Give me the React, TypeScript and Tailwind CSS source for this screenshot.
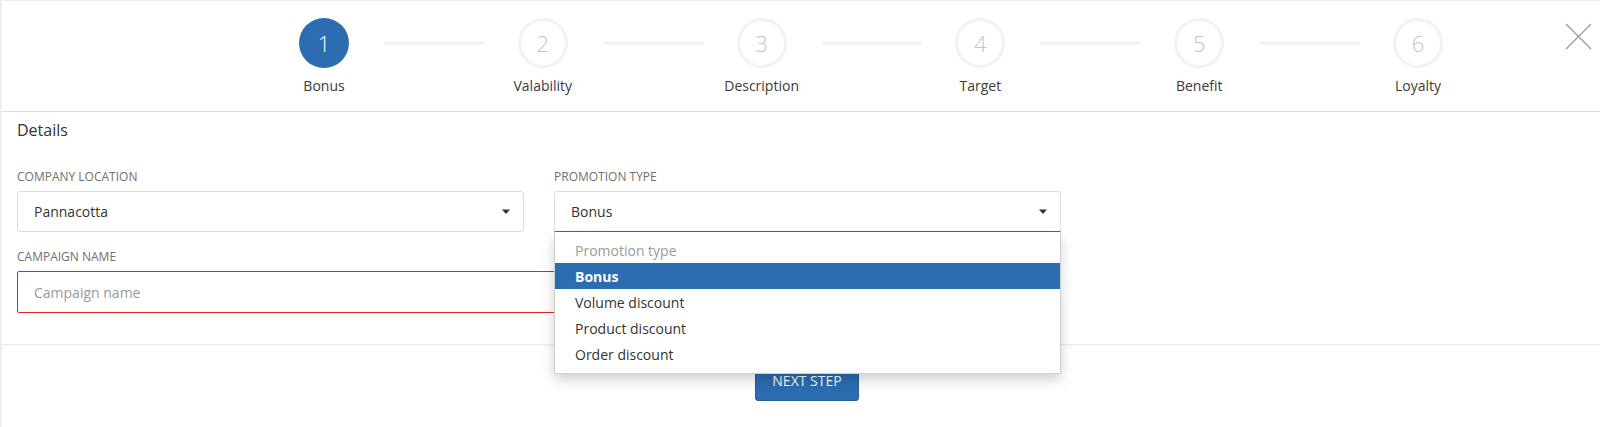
import React from 'react';

const steps = ['Bonus', 'Valability', 'Description', 'Target', 'Benefit', 'Loyalty'];

const options = ['Bonus', 'Volume discount', 'Product discount', 'Order discount'];

const Caret = () => (
  <svg width="10" height="6" viewBox="0 0 10 6" className="shrink-0">
    <path d="M1 0.5h8L5 5z" fill="#333" />
  </svg>
);

const App: React.FC = () => {
  return (
    <div
      className="w-[1600px] h-[427px] bg-white border-l-2 border-[#eceef3] overflow-hidden text-[#333]"
      style={{ fontFamily: '"Open Sans", "Noto Sans", Arial, sans-serif' }}
    >
      {/* Wizard header */}
      <header className="h-[112px] border-t border-[#eef0f4] border-b border-b-[#d6dde6] flex items-start pl-[297px]">
        <div className="flex items-start w-[1144px] mt-[17px]">
          {steps.map((label, i) => (
            <React.Fragment key={label}>
              <div className="flex flex-col items-center w-[50px] shrink-0">
                <div
                  className={
                    i === 0
                      ? 'w-[50px] h-[50px] rounded-full bg-[#2b6db0] flex items-center justify-center text-white text-[22px] font-light'
                      : 'w-[50px] h-[50px] rounded-full border-[3px] border-[#f0f2f6] flex items-center justify-center text-[#c4c4c4] text-[22px] font-light'
                  }
                >
                  {i + 1}
                </div>
                <span className="mt-[8px] text-[14px] leading-[19px] whitespace-nowrap text-[#3a3a3a]">{label}</span>
              </div>
              {i < steps.length - 1 && (
                <div className="flex-1 h-[4px] bg-[#f2f3f7] mt-[23px] ml-[35px] mr-[33px]" />
              )}
            </React.Fragment>
          ))}
        </div>
        <button className="ml-auto mr-[8px] mt-[22px] text-[#9a9a9a]">
          <svg width="27" height="27" viewBox="0 0 27 27" fill="none" stroke="currentColor" strokeWidth="1.3">
            <path d="M1 1l25 25M26 1L1 26" />
          </svg>
        </button>
      </header>

      {/* Details form */}
      <section className="px-[15px] pt-[7px] pb-[31px] border-b border-[#ececec] shadow-[0_1px_2px_rgba(0,0,0,0.04)]">
        <h2 className="text-[16px] leading-[22px] text-[#333]">Details</h2>

        <div className="flex gap-[30px] mt-[27px] w-[1044px]">
          <div className="flex-1">
            <label className="block text-[12px] leading-[17px] uppercase text-[#6f6f6f]">Company location</label>
            <div className="mt-[6px] h-[41px] border border-[#d6dde6] rounded-[3px] flex items-center justify-between pl-[16px] pr-[12px] text-[14px]">
              <span>Pannacotta</span>
              <Caret />
            </div>
          </div>

          <div className="flex-1 relative">
            <label className="block text-[12px] leading-[17px] uppercase text-[#6f6f6f]">Promotion type</label>
            <div className="mt-[6px] h-[41px] border border-[#d6dde6] border-b-[#2b6db0] rounded-t-[3px] flex items-center justify-between pl-[16px] pr-[12px] text-[14px]">
              <span>Bonus</span>
              <Caret />
            </div>
            {/* Open dropdown */}
            <ul className="absolute left-0 right-0 top-[64px] z-10 bg-white border border-[#cfcfcf] border-t-0 shadow-[0_6px_12px_rgba(0,0,0,0.18)] pt-[6px] pb-[6px] text-[14px]">
              <li className="h-[25px] flex items-center pl-[20px] text-[#9a9a9a]">Promotion type</li>
              {options.map((o, i) => (
                <li
                  key={o}
                  className={
                    i === 0
                      ? 'h-[26px] flex items-center pl-[20px] bg-[#2b6db0] text-white font-bold'
                      : 'h-[26px] flex items-center pl-[20px] text-[#333]'
                  }
                >
                  {o}
                </li>
              ))}
            </ul>
          </div>
        </div>

        <div className="mt-[16px] w-[1044px]">
          <label className="block text-[12px] leading-[17px] uppercase text-[#6f6f6f]">Campaign name</label>
          <input
            placeholder="Campaign name"
            className="mt-[6px] w-full h-[42px] border border-[#e3202a] rounded-[2px] pl-[16px] text-[14px] placeholder:text-[#9a9a9a] outline-none"
          />
        </div>
      </section>

      <div className="flex justify-center pl-[12px] pt-[15px]">
        <button className="w-[104px] h-[41px] bg-[#2b6db0] border border-[#255f9a] rounded-[3px] text-white text-[14px] uppercase">
          Next step
        </button>
      </div>
    </div>
  );
};

export default App;
